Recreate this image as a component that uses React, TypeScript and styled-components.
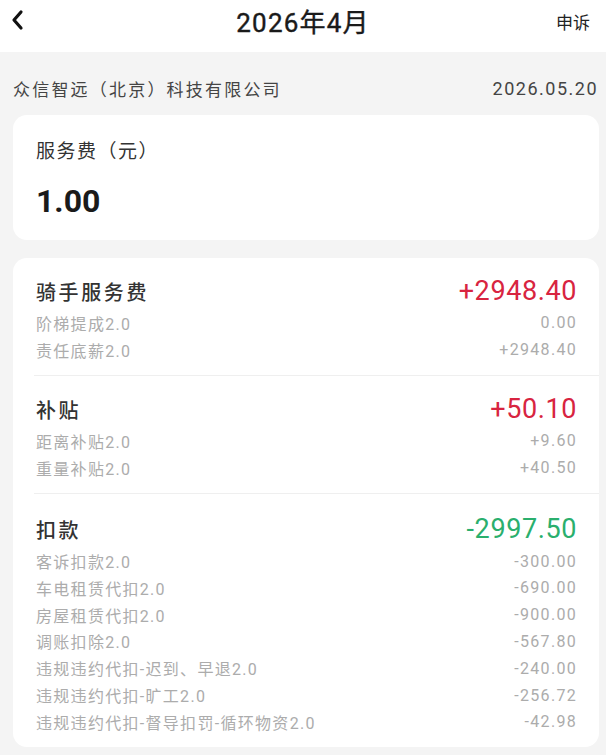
import React from 'react';
import styled, {createGlobalStyle} from 'styled-components';

const GlobalStyle = createGlobalStyle`
  body {
    margin: 0;
    background: #f4f4f4;
    font-family: Roboto, "Noto Sans CJK SC", sans-serif;
  }
`;

const Page = styled.div`
  width: 606px;
  min-height: 755px;
  background: #f4f4f4;
`;

const Header = styled.div`
  height: 40px;
  padding-bottom: 12px;
  background: #fff;
  display: grid;
  grid-template-columns: 80px 1fr 80px;
  align-items: center;
`;

const BackBtn = styled.div`
  padding-left: 11px;
  display: flex;
  align-items: center;
  height: 100%;
`;

const Title = styled.div`
  text-align: center;
  font-size: 26px;
  font-weight: 400;
  color: #1a1a1a;
  letter-spacing: 1.2px;
  -webkit-text-stroke: 0.4px #1a1a1a;
`;

const Complain = styled.div`
  text-align: right;
  padding-right: 16px;
  padding-top: 3px;
  font-size: 17px;
  color: #222;
`;

const Content = styled.div`
  padding: 0 7px 0 13px;
  display: flex;
  flex-direction: column;
`;

const CompanyRow = styled.div`
  display: flex;
  justify-content: space-between;
  align-items: center;
  height: 20px;
  padding: 26px 1px 17px 0;
  font-size: 17px;
  color: #444;
  letter-spacing: 2.2px;
`;

const DateText = styled.span`
  font-size: 18px;
  letter-spacing: 1.5px;
`;

const Card = styled.div<{$gap?: number}>`
  background: #fff;
  border-radius: 14px;
  margin-bottom: ${p => p.$gap ?? 0}px;
`;

const FeeCard = styled(Card)`
  height: 125px;
  padding-left: 23px;
  box-sizing: border-box;
  display: flex;
  flex-direction: column;
`;

const FeeLabel = styled.div`
  margin-top: 24px;
  font-size: 19px;
  line-height: 26px;
  color: #333;
  letter-spacing: 1.5px;
`;

const FeeValue = styled.div`
  margin-top: 15px;
  font-size: 32px;
  line-height: 42px;
  font-weight: 700;
  color: #1a1a1a;
`;

const Section = styled.div<{$last?: boolean}>`
  padding: ${p => (p.$last ? '20px 22px 12px 23px' : '18px 22px 12px 23px')};
`;

const SectionHead = styled.div`
  display: flex;
  justify-content: space-between;
  align-items: center;
  height: 30px;
  margin-bottom: 3.5px;
`;

const SectionTitle = styled.div`
  font-size: 20px;
  font-weight: 500;
  color: #333;
  letter-spacing: 2.6px;
`;

const SectionAmount = styled.div<{$tone: 'red' | 'green'}>`
  font-size: 27px;
  font-weight: 400;
  letter-spacing: 0.6px;
  color: ${p => (p.$tone === 'red' ? '#d82440' : '#2aaf6d')};
`;

const Line = styled.div`
  display: flex;
  justify-content: space-between;
  align-items: center;
  height: 26.8px;
  font-size: 16px;
  color: #acacac;
  letter-spacing: 1.3px;
`;

const Divider = styled.div`
  height: 1px;
  background: #efefef;
  margin-left: 21px;
`;

const Chevron = () => (
  <svg width="14" height="22" viewBox="0 0 14 22">
    <polyline
      points="10,3 3,11 10,19"
      fill="none"
      stroke="#111"
      strokeWidth="3.2"
      strokeLinecap="round"
      strokeLinejoin="round"
    />
  </svg>
);

type Item = {label: string; value: string};
type Group = {title: string; total: string; tone: 'red' | 'green'; items: Item[]};

const groups: Group[] = [
  {
    title: '骑手服务费',
    total: '+2948.40',
    tone: 'red',
    items: [
      {label: '阶梯提成2.0', value: '0.00'},
      {label: '责任底薪2.0', value: '+2948.40'},
    ],
  },
  {
    title: '补贴',
    total: '+50.10',
    tone: 'red',
    items: [
      {label: '距离补贴2.0', value: '+9.60'},
      {label: '重量补贴2.0', value: '+40.50'},
    ],
  },
  {
    title: '扣款',
    total: '-2997.50',
    tone: 'green',
    items: [
      {label: '客诉扣款2.0', value: '-300.00'},
      {label: '车电租赁代扣2.0', value: '-690.00'},
      {label: '房屋租赁代扣2.0', value: '-900.00'},
      {label: '调账扣除2.0', value: '-567.80'},
      {label: '违规违约代扣-迟到、早退2.0', value: '-240.00'},
      {label: '违规违约代扣-旷工2.0', value: '-256.72'},
      {label: '违规违约代扣-督导扣罚-循环物资2.0', value: '-42.98'},
    ],
  },
];

const App = () => {
  return (
    <Page>
      <GlobalStyle />
      <Header>
        <BackBtn>
          <Chevron />
        </BackBtn>
        <Title>2026年4月</Title>
        <Complain>申诉</Complain>
      </Header>
      <Content>
        <CompanyRow>
          <span>众信智远（北京）科技有限公司</span>
          <DateText>2026.05.20</DateText>
        </CompanyRow>
        <FeeCard $gap={18}>
          <FeeLabel>服务费（元）</FeeLabel>
          <FeeValue>1.00</FeeValue>
        </FeeCard>
        <Card>
          {groups.map((g, i) => (
            <React.Fragment key={g.title}>
              <Section $last={i === groups.length - 1}>
                <SectionHead>
                  <SectionTitle>{g.title}</SectionTitle>
                  <SectionAmount $tone={g.tone}>{g.total}</SectionAmount>
                </SectionHead>
                {g.items.map(it => (
                  <Line key={it.label}>
                    <span>{it.label}</span>
                    <span>{it.value}</span>
                  </Line>
                ))}
              </Section>
              {i < groups.length - 1 && <Divider />}
            </React.Fragment>
          ))}
        </Card>
      </Content>
    </Page>
  );
};

export default App;
